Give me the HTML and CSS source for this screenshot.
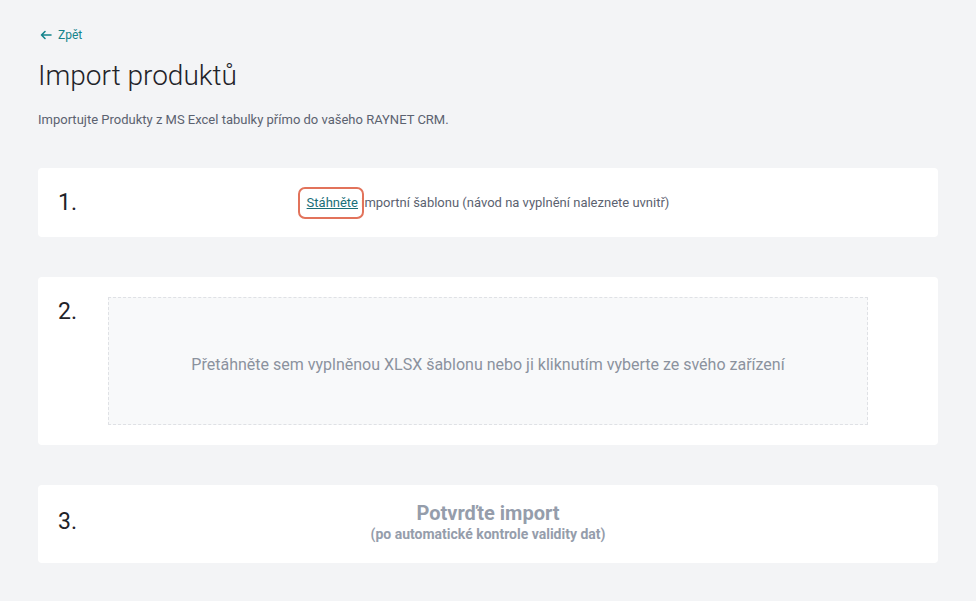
FILE: index.html
```html
<!DOCTYPE html>
<html lang="cs">
<head>
  <meta charset="UTF-8">
  <meta name="viewport" content="width=device-width, initial-scale=1.0">
  <title>Import produktů</title>
  <link rel="stylesheet" href="styles.css">
</head>
<body>
  <div class="page">
    <a class="back-link" href="#">
      <svg class="arrow" width="12" height="10" viewBox="0 0 12 10" fill="none" stroke="currentColor" stroke-width="1.6" stroke-linecap="round" stroke-linejoin="round">
        <path d="M11 5H1.5M5 1.5L1.5 5L5 8.5"/>
      </svg>
      Zpět
    </a>
    <h1>Import produktů</h1>
    <p class="intro">Importujte Produkty z MS Excel tabulky přímo do vašeho RAYNET CRM.</p>

    <div class="step step-download">
      <div class="step-num">1.</div>
      <div class="step-body">
        <span class="download-text"><span class="highlight"><a href="#">Stáhněte</a></span> importní šablonu (návod na vyplnění naleznete uvnitř)</span>
      </div>
    </div>

    <div class="step step-upload">
      <div class="step-num">2.</div>
      <div class="dropzone">Přetáhněte sem vyplněnou XLSX šablonu nebo ji kliknutím vyberte ze svého zařízení</div>
    </div>

    <div class="step step-confirm">
      <div class="step-num">3.</div>
      <div class="step-body confirm">
        <div class="confirm-title">Potvrďte import</div>
        <div class="confirm-sub">(po automatické kontrole validity dat)</div>
      </div>
    </div>
  </div>
</body>
</html>
```

FILE: styles.css
```css
body {
  margin: 0;
  background: #f3f4f6;
  font-family: Roboto, "Liberation Sans", sans-serif;
  color: #2b2f36;
}

.page {
  padding: 25px 38px 30px;
}

.back-link {
  display: inline-flex;
  align-items: center;
  color: #14848c;
  font-size: 12px;
  text-decoration: none;
  margin-left: 2px;
  line-height: 16px;
}

.back-link .arrow {
  margin-right: 6px;
}

h1 {
  margin: 15px 0 0;
  font-size: 28px;
  font-weight: 300;
  line-height: 34px;
  color: #1f2329;
}

.intro {
  margin: 18px 0 0;
  font-size: 13px;
  color: #5b6270;
  line-height: 18px;
}

.step {
  background: #fff;
  border-radius: 4px;
  display: flex;
  position: relative;
}

.step-num {
  font-size: 23px;
  color: #1f2329;
  width: 70px;
  padding-left: 20px;
  box-sizing: border-box;
  position: relative;
  z-index: 1;
}

.step-download {
  margin-top: 39px;
  height: 69px;
  align-items: center;
}

.step-download .step-body {
  position: absolute;
  left: 0;
  right: 0;
  top: 0;
  bottom: 0;
  display: flex;
  align-items: center;
  justify-content: center;
}

.download-text {
  font-size: 13px;
  color: #5b6270;
}

.highlight {
  position: relative;
}

.highlight::after {
  content: "";
  position: absolute;
  left: -9px;
  right: -6px;
  top: -8px;
  bottom: -9px;
  border: 2px solid #e2735b;
  border-radius: 7px;
  pointer-events: none;
}

.highlight a {
  color: #1a6e78;
  text-decoration: underline;
}

.step-upload {
  margin-top: 40px;
  padding: 20px 0;
  align-items: flex-start;
}

.step-upload .step-num {
  padding-top: 1px;
}

.dropzone {
  width: 760px;
  height: 128px;
  box-sizing: border-box;
  border: 1px dashed #dfe1e5;
  background: #f8f9fa;
  display: flex;
  align-items: center;
  justify-content: center;
  padding-top: 6px;
  font-size: 16px;
  color: #8b929e;
}

.step-confirm {
  margin-top: 40px;
  height: 78px;
  align-items: center;
}

.step-confirm .step-num {
  margin-top: -6px;
}

.confirm {
  position: absolute;
  left: 0;
  right: 0;
  top: 0;
  bottom: 0;
  display: flex;
  flex-direction: column;
  align-items: center;
  justify-content: center;
  padding-bottom: 3px;
  color: #959dab;
  font-weight: 700;
}

.confirm-title {
  font-size: 20px;
  line-height: 22px;
}

.confirm-sub {
  font-size: 14px;
  line-height: 18px;
  margin-top: 1px;
}
```
